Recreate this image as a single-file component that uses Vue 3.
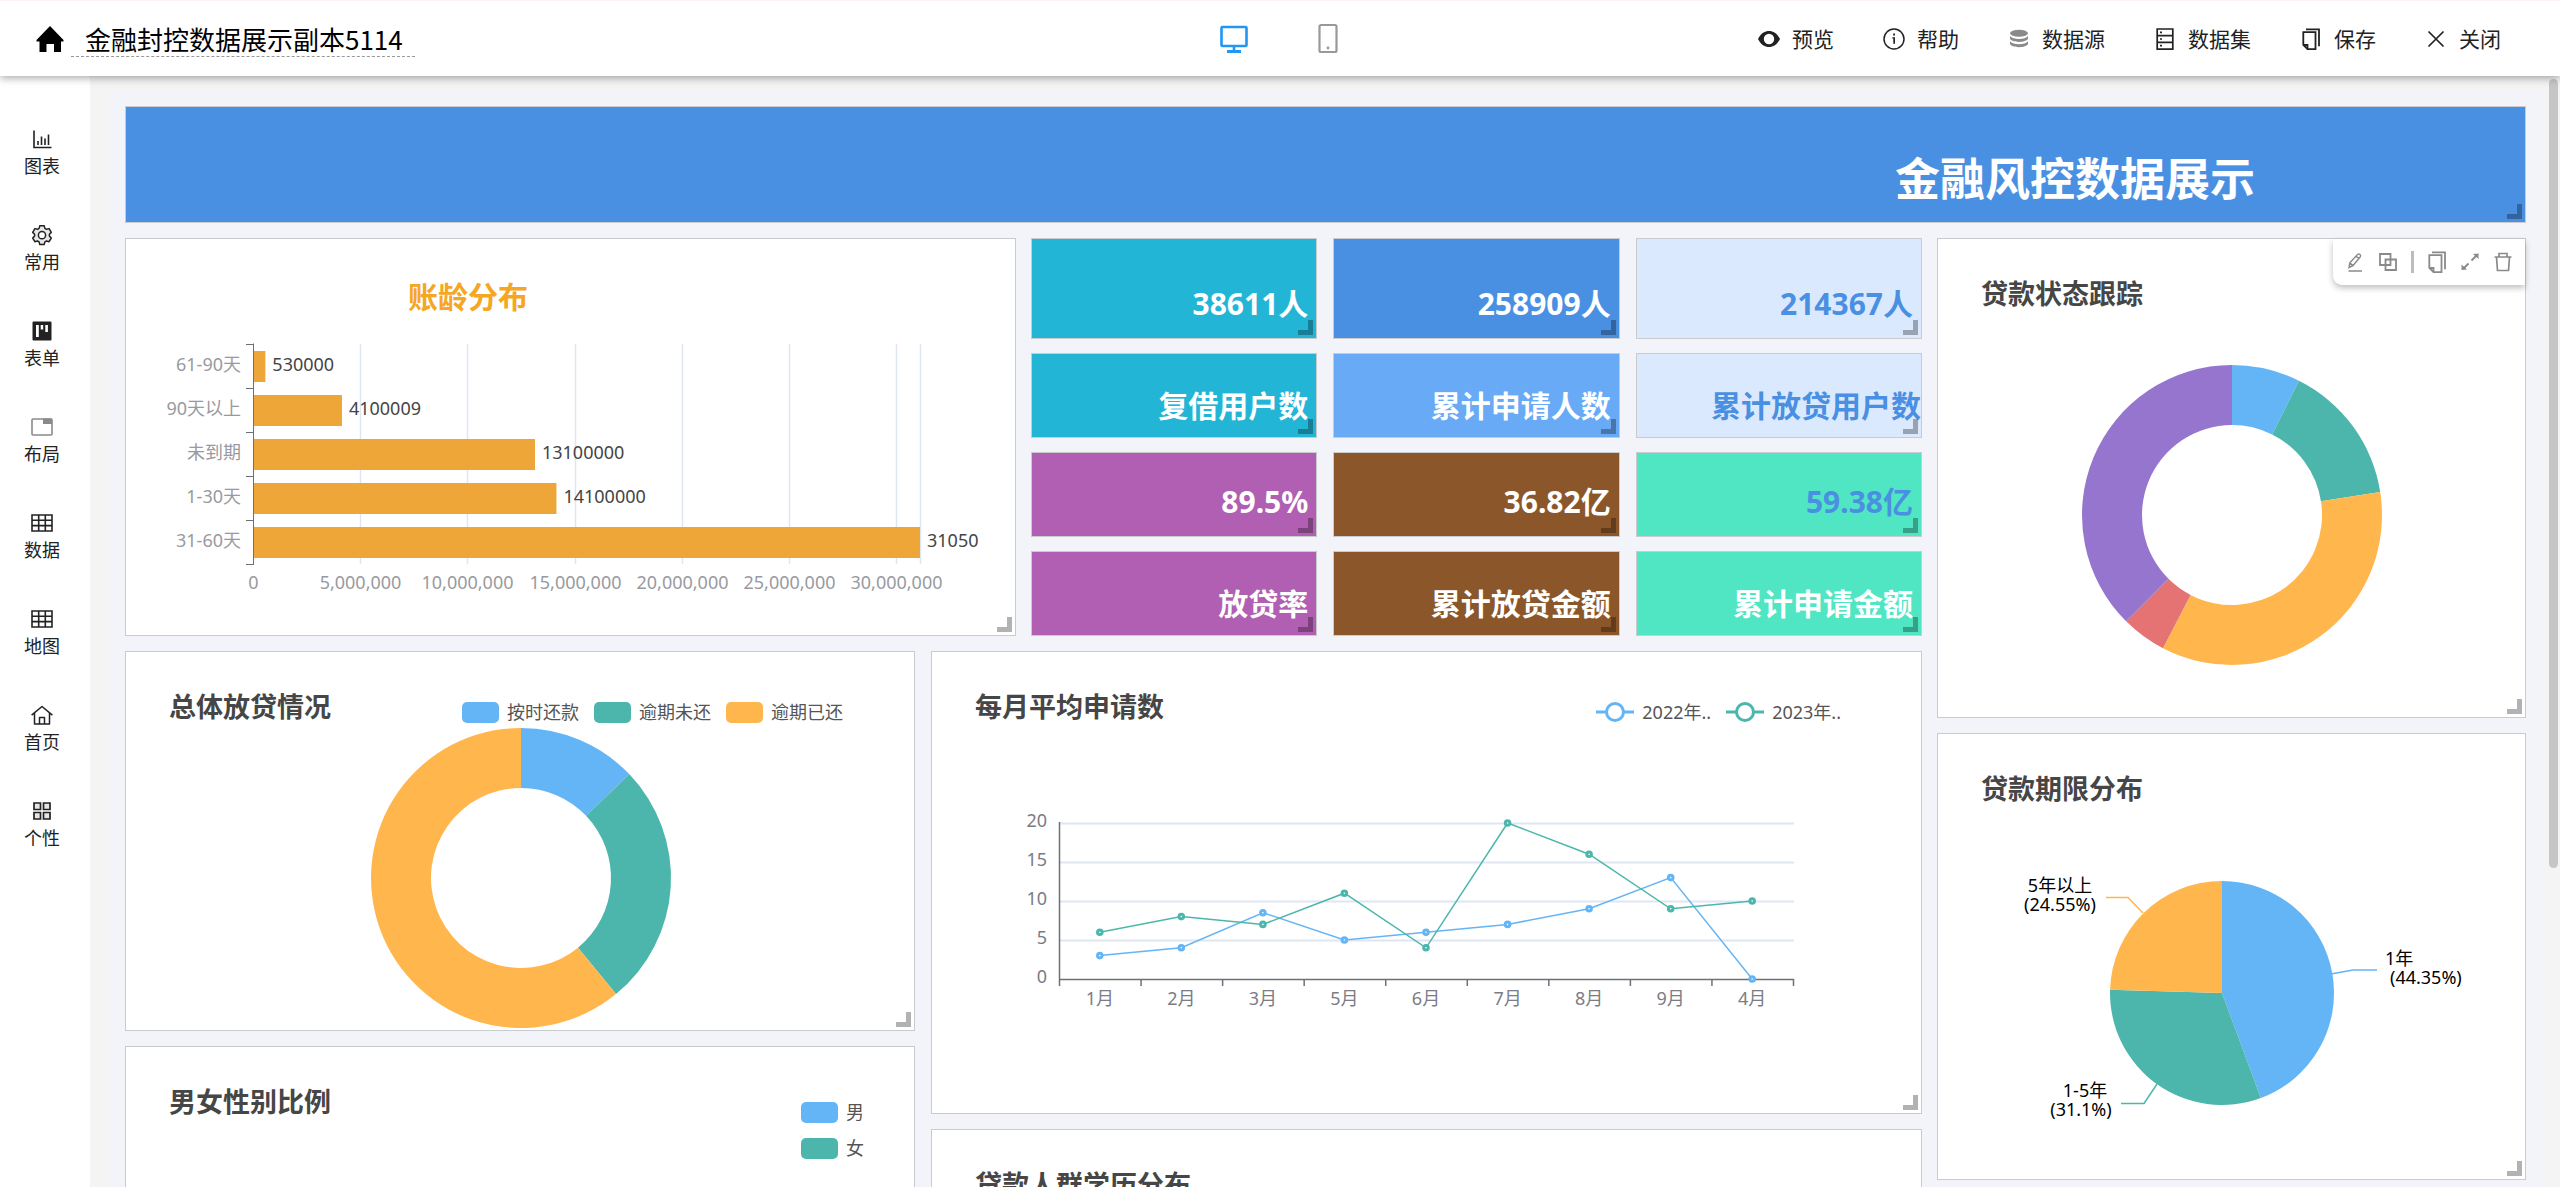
<script setup>
import { ref } from 'vue'

const projectName = ref('金融封控数据展示副本5114')

const menu = [
  { icon: 'eye', label: '预览' },
  { icon: 'info', label: '帮助' },
  { icon: 'database', label: '数据源' },
  { icon: 'server', label: '数据集' },
  { icon: 'pages', label: '保存' },
  { icon: 'close', label: '关闭' }
]

const groups = [
  { icon: 'chart', label: '图表' },
  { icon: 'gear', label: '常用' },
  { icon: 'board', label: '表单' },
  { icon: 'tab', label: '布局' },
  { icon: 'table', label: '数据' },
  { icon: 'table', label: '地图' },
  { icon: 'house', label: '首页' },
  { icon: 'tiles', label: '个性' }
]

const kpis = [
  { text: '38611人', tone: 'teal', value: true },
  { text: '258909人', tone: 'blue', value: true },
  { text: '214367人', tone: 'pale', value: true },
  { text: '复借用户数', tone: 'teal' },
  { text: '累计申请人数', tone: 'sky' },
  { text: '累计放贷用户数', tone: 'pale', flush: true },
  { text: '89.5%', tone: 'purple', value: true },
  { text: '36.82亿', tone: 'brown', value: true },
  { text: '59.38亿', tone: 'mint', value: true, accent: true },
  { text: '放贷率', tone: 'purple' },
  { text: '累计放贷金额', tone: 'brown' },
  { text: '累计申请金额', tone: 'mint' }
]

const BLUE = '#64b5f6'
const GREEN = '#4db6ac'
const ORANGE = '#ffb74d'

// Ageing bar chart
const barMax = 31050000
const barWidth = (v) => (v / barMax) * 666
const bars = [
  { name: '61-90天', value: 530000, label: '530000' },
  { name: '90天以上', value: 4100009, label: '4100009' },
  { name: '未到期', value: 13100000, label: '13100000' },
  { name: '1-30天', value: 14100000, label: '14100000' },
  { name: '31-60天', value: 31050000, label: '31050' }
]
const barTicks = [0, 5, 10, 15, 20, 25, 30].map((m) => ({
  x: Math.round(127 + barWidth(m * 1000000)) + 0.5,
  label: m ? `${m},000,000` : '0'
}))

// Pie and ring sectors, angles in degrees clockwise from the top
function sector(cx, cy, outer, inner, from, to) {
  const at = (r, deg) => {
    const a = (deg * Math.PI) / 180
    return `${(cx + r * Math.sin(a)).toFixed(2)} ${(cy - r * Math.cos(a)).toFixed(2)}`
  }
  const large = to - from > 180 ? 1 : 0
  const head = `M${at(outer, from)}A${outer} ${outer} 0 ${large} 1 ${at(outer, to)}`
  return inner
    ? `${head}L${at(inner, to)}A${inner} ${inner} 0 ${large} 0 ${at(inner, from)}Z`
    : `${head}L${cx} ${cy}Z`
}
const slices = (cx, cy, outer, inner, stops, colors) =>
  colors.map((color, i) => ({ color, d: sector(cx, cy, outer, inner, stops[i], stops[i + 1]) }))

const statusRing = slices(294, 201, 150, 90, [0, 26.5, 81.2, 207.4, 224.9, 360],
  [BLUE, GREEN, ORANGE, '#e57373', '#9575cd'])
const loanRing = slices(395, 151, 150, 90, [0, 46.3, 140.7, 360], [BLUE, GREEN, ORANGE])
const termPie = slices(284, 184, 112, 0, [0, 159.7, 271.6, 360], [BLUE, GREEN, ORANGE])

const loanLegend = [
  { label: '按时还款', color: BLUE },
  { label: '逾期未还', color: GREEN },
  { label: '逾期已还', color: ORANGE }
]
const genderLegend = [
  { label: '男', color: BLUE },
  { label: '女', color: GREEN }
]

// Monthly line chart
const months = ['1月', '2月', '3月', '5月', '6月', '7月', '8月', '9月', '4月']
const step = 734 / months.length
const series = [
  { label: '2022年..', color: BLUE, data: [3, 4, 8.5, 5, 6, 7, 9, 13, 0] },
  { label: '2023年..', color: GREEN, data: [6, 8, 7, 11, 4, 20, 16, 9, 10] }
].map((s) => ({
  ...s,
  points: s.data.map((v, i) => ({
    x: Number((127 + step * (i + 0.5)).toFixed(1)),
    y: Number((252 - v * 7.8).toFixed(1))
  }))
}))
const levels = [0, 5, 10, 15, 20]
</script>

<template>
  <div class="app">
    <svg class="sprite" aria-hidden="true">
      <symbol id="i-home" viewBox="0 0 28 28">
        <path d="M14 1 27.500 15v1.500H25V27h-7v-8h-7.500v8H3.500V16.500H.5V15z" />
      </symbol>
      <symbol id="i-desktop" viewBox="0 0 28 32">
        <rect x="1.500" y="4" width="25" height="19" rx="1" fill="none" stroke="currentColor" stroke-width="2.600" />
        <path d="M12.700 24h2.600v3H21v3H7v-3h5.700z" />
      </symbol>
      <symbol id="i-phone" viewBox="0 0 28 32">
        <rect x="5.500" y="2" width="17" height="27" rx="1.500" fill="none" stroke="currentColor" stroke-width="2.200" />
        <circle cx="14" cy="25" r="1.400" />
      </symbol>
      <symbol id="i-eye" viewBox="0 0 24 24">
        <path fill-rule="evenodd" d="M1 12C4 6 8 4 12 4s8 2 11 8c-3 6-7 8-11 8S4 18 1 12zm11-5.200a5.200 5.200 0 1 0 0 10.400 5.200 5.200 0 0 0 0-10.400z" />
      </symbol>
      <symbol id="i-info" viewBox="0 0 24 24">
        <circle cx="12" cy="12" r="10" fill="none" stroke="currentColor" stroke-width="1.500" />
        <path d="M11.200 6.500h1.800v2h-1.800zM10.300 10.200H13v6.600h-1.700v-5.400h-1z" />
      </symbol>
      <symbol id="i-database" viewBox="0 0 24 24">
        <g fill="#8a8a8a">
          <ellipse cx="12" cy="6.300" rx="9" ry="3.500" />
          <path d="M3 8.900c1.500 2 5 3 9 3s7.500-1 9-3v2.300c0 1.900-4 3.700-9 3.700s-9-1.800-9-3.700z" />
          <path d="M3 14.200c1.500 2 5 3 9 3s7.500-1 9-3v2.300c0 1.900-4 3.700-9 3.700s-9-1.800-9-3.700z" />
        </g>
      </symbol>
      <symbol id="i-server" viewBox="0 0 24 24">
        <path d="M4.200 2h15.600v20.200H4.200zM4.200 8.700h15.600M4.200 15.400h15.600" fill="none" stroke="currentColor" stroke-width="1.700" />
        <path d="M7 4.600h2v1.600H7zM7 11.200h2v1.600H7zM7 17.800h2v1.600H7z" />
      </symbol>
      <symbol id="i-pages" viewBox="0 0 24 24">
        <path d="M7 2.300h13v17M4.300 5.200H16.500v17H8.500L4.300 18zM4.300 18h4.200v4.200" fill="none" stroke="currentColor" stroke-width="1.800" />
      </symbol>
      <symbol id="i-close" viewBox="0 0 24 24">
        <path d="M4.500 4.500l15 15M19.500 4.500l-15 15" fill="none" stroke="currentColor" stroke-width="1.700" />
      </symbol>
      <symbol id="i-chart" viewBox="0 0 22 22">
        <path d="M3 2.500v17h17.500M7 17v-4M10.500 17V8.500M14 17v-6.500M17.500 17V6.500" fill="none" stroke="currentColor" stroke-width="1.600" />
      </symbol>
      <symbol id="i-gear" viewBox="0 0 22 22">
        <path d="M8.800 1.800h4.400l.7 2.600 1.600.9 2.600-.7 2.200 3.800-1.900 1.900v1.800l1.900 1.900-2.200 3.700-2.600-.7-1.600.9-.7 2.600H8.800l-.7-2.600-1.600-.9-2.600.7L1.700 14l1.900-1.900v-1.800L1.700 8.400l2.200-3.800 2.600.7 1.600-.9z" fill="#e6e6e6" stroke="currentColor" stroke-width="1.500" stroke-linejoin="round" />
        <circle cx="11" cy="11.200" r="3.600" fill="#fff" stroke="currentColor" stroke-width="1.500" />
      </symbol>
      <symbol id="i-board" viewBox="0 0 22 22">
        <path fill-rule="evenodd" d="M2.500 1.500h17a1 1 0 0 1 1 1v17a1 1 0 0 1-1 1h-17a1 1 0 0 1-1-1v-17a1 1 0 0 1 1-1zM5 5v12h2.800V5zm4.700 0v4.500h2.500V5zm4.600 0v7h2.600V5z" />
      </symbol>
      <symbol id="i-tab" viewBox="0 0 22 22">
        <g fill="none" stroke="#8a8a8a" stroke-width="1.600">
          <rect x="1" y="3" width="20" height="16" rx="1" />
        </g>
        <path d="M12 2.500h9V8h-9z" fill="#8a8a8a" />
      </symbol>
      <symbol id="i-table" viewBox="0 0 22 22">
        <path d="M1 3h20v16H1zM1 8.300h20M1 13.600h20M7.700 3v16M14.300 3v16" fill="none" stroke="currentColor" stroke-width="1.600" />
      </symbol>
      <symbol id="i-house" viewBox="0 0 22 22">
        <path d="M.6 11.200 11 2.500l10.400 8.700M3.500 9v11h15V9M8.500 20v-6.500h5V20" fill="none" stroke="currentColor" stroke-width="1.500" stroke-linejoin="round" />
      </symbol>
      <symbol id="i-tiles" viewBox="0 0 22 22">
        <path d="M3 3h6.500v6.500H3zM12.500 3H19v6.500h-6.500zM3 12.500h6.500V19H3zM12.500 12.500H19V19h-6.500z" fill="#e6e6e6" stroke="currentColor" stroke-width="1.700" />
      </symbol>
      <symbol id="i-pen" viewBox="0 0 24 24">
        <path d="M5.500 21h13.500M6 17.500l.8-4.600L14.500 4.500q1.200-1 2.400.1t.2 2.400L10 15.600zM13 6l2.600 2.400M6.800 12.900l3.200 2.700" fill="none" stroke="currentColor" stroke-width="1.400" />
      </symbol>
      <symbol id="i-copy" viewBox="0 0 24 24">
        <path d="M4 4h10.500v11H4zM9.500 9.500h10.500V20H9.500z" fill="none" stroke="currentColor" stroke-width="1.800" />
      </symbol>
      <symbol id="i-expand" viewBox="0 0 24 24">
        <path d="M13.500 10.500l5-5M5.500 18.500l5-5" fill="none" stroke="currentColor" stroke-width="1.800" />
        <path d="M20.500 3.500v5.500L15 4zM3.500 20v-5.500L9 19.500z" />
      </symbol>
      <symbol id="i-trash" viewBox="0 0 24 24">
        <path d="M3.500 7h17M8 7V3.500h8V7M5.500 7l1 13.500h11L18.500 7" fill="none" stroke="currentColor" stroke-width="1.700" />
      </symbol>
    </svg>

    <header class="topbar">
      <div class="project">
        <a class="home" href="#" aria-label="首页"><svg><use href="#i-home" /></svg></a>
        <input v-model="projectName" class="name" type="text" aria-label="名称" spellcheck="false" />
      </div>
      <div class="devices">
        <button class="device active" type="button" aria-label="桌面"><svg><use href="#i-desktop" /></svg></button>
        <button class="device" type="button" aria-label="手机"><svg><use href="#i-phone" /></svg></button>
      </div>
      <nav class="menu">
        <button v-for="m in menu" :key="m.label" type="button" class="menu-item">
          <svg aria-hidden="true"><use :href="'#i-' + m.icon" /></svg>
          <span>{{ m.label }}</span>
        </button>
      </nav>
    </header>

    <div class="main">
      <aside class="side">
        <button v-for="g in groups" :key="g.label" type="button" class="side-item">
          <svg aria-hidden="true"><use :href="'#i-' + g.icon" /></svg>
          <span>{{ g.label }}</span>
        </button>
      </aside>

      <main class="workspace">
        <div class="board">
          <section class="card banner">
            <h1>金融风控数据展示</h1>
            <i class="grip"></i>
          </section>

          <div class="columns">
            <div class="stack">
              <div class="halves">
                <section class="card">
                  <h2 class="age-title">账龄分布</h2>
                  <svg class="plot" viewBox="0 0 889 318">
                    <g stroke="#e0e6f1" stroke-width="1.500">
                      <line v-for="t in barTicks.slice(1)" :key="t.x" :x1="t.x" :x2="t.x" y1="27" y2="247" />
                      <line x1="794.5" x2="794.5" y1="27" y2="247" />
                    </g>
                    <rect v-for="(b, i) in bars" :key="b.name" x="128" :y="34 + 44 * i" :width="barWidth(b.value)" height="31" fill="#eda637" />
                    <path d="M127.500 26.500v221M120 27.500h8M120 71.500h8M120 115.500h8M120 159.500h8M120 203.500h8M120 247.500h8" fill="none" stroke="#6e7079" />
                    <g class="axis" text-anchor="end">
                      <text v-for="(b, i) in bars" :key="b.name" x="115" :y="54 + 44 * i">{{ b.name }}</text>
                    </g>
                    <g class="axis" text-anchor="middle">
                      <text v-for="t in barTicks" :key="t.label" :x="t.x" y="272">{{ t.label }}</text>
                    </g>
                    <g class="value">
                      <text v-for="(b, i) in bars" :key="b.name" :x="135 + barWidth(b.value)" :y="54 + 44 * i">{{ b.label }}</text>
                    </g>
                  </svg>
                  <i class="grip"></i>
                </section>

                <div class="kpis">
                  <section v-for="k in kpis" :key="k.text" class="card kpi" :class="[k.tone, { value: k.value, flush: k.flush, accent: k.accent }]">
                    <strong>{{ k.text }}</strong>
                    <i class="grip"></i>
                  </section>
                </div>
              </div>

              <div class="lower">
                <div class="stack">
                  <section class="card">
                    <div class="head">
                      <h2>总体放贷情况</h2>
                      <ul class="legend loan">
                        <li v-for="l in loanLegend" :key="l.label"><i class="swatch" :style="{ background: l.color }"></i>{{ l.label }}</li>
                      </ul>
                    </div>
                    <svg class="plot" viewBox="0 0 788 303">
                      <path v-for="s in loanRing" :key="s.d" :d="s.d" :fill="s.color" />
                    </svg>
                    <i class="grip"></i>
                  </section>
                  <section class="card tall">
                    <div class="head">
                      <h2>男女性别比例</h2>
                      <ul class="legend gender">
                        <li v-for="l in genderLegend" :key="l.label"><i class="swatch" :style="{ background: l.color }"></i>{{ l.label }}</li>
                      </ul>
                    </div>
                  </section>
                </div>

                <div class="stack">
                  <section class="card">
                    <div class="head">
                      <h2>每月平均申请数</h2>
                      <ul class="legend monthly">
                        <li v-for="s in series" :key="s.label">
                          <svg class="marker" viewBox="0 0 38 22">
                            <path d="M0 11h38" :stroke="s.color" stroke-width="3" />
                            <circle cx="19" cy="11" r="8.500" fill="#fff" :stroke="s.color" stroke-width="3" />
                          </svg>{{ s.label }}
                        </li>
                      </ul>
                    </div>
                    <svg class="plot" viewBox="0 0 989 386">
                      <line v-for="l in levels.slice(1)" :key="l" x1="128" x2="862" :y1="252.5 - l * 7.8" :y2="252.5 - l * 7.8" stroke="#e0e6f1" stroke-width="1.800" />
                      <path d="M127.500 95v164M127 252.500h735" fill="none" stroke="#6e7079" stroke-width="1.500" />
                      <line v-for="(m, i) in months" :key="m" :x1="127.5 + step * (i + 1)" :x2="127.5 + step * (i + 1)" y1="252" y2="259" stroke="#6e7079" stroke-width="1.500" />
                      <g class="axis dark" text-anchor="end">
                        <text v-for="l in levels" :key="l" x="115" :y="256 - l * 7.8">{{ l }}</text>
                      </g>
                      <g class="axis dark" text-anchor="middle">
                        <text v-for="(m, i) in months" :key="m" :x="127 + step * (i + 0.5)" y="278">{{ m }}</text>
                      </g>
                      <g v-for="s in series" :key="s.label" fill="none" :stroke="s.color">
                        <polyline :points="s.points.map((p) => p.x + ',' + p.y).join(' ')" stroke-width="1.500" />
                        <circle v-for="p in s.points" :key="p.x" :cx="p.x" :cy="p.y" r="2.300" fill="#fff" stroke-width="3" />
                      </g>
                    </svg>
                    <i class="grip"></i>
                  </section>
                  <section class="card tall">
                    <div class="head"><h2>贷款人群学历分布</h2></div>
                  </section>
                </div>
              </div>
            </div>

            <div class="stack">
              <section class="card">
                <div class="tools">
                  <button type="button" aria-label="编辑"><svg><use href="#i-pen" /></svg></button>
                  <button type="button" aria-label="复制"><svg><use href="#i-copy" /></svg></button>
                  <span class="divider"></span>
                  <button type="button" aria-label="粘贴"><svg><use href="#i-pages" /></svg></button>
                  <button type="button" aria-label="放大"><svg><use href="#i-expand" /></svg></button>
                  <button type="button" aria-label="删除"><svg><use href="#i-trash" /></svg></button>
                </div>
                <div class="head"><h2>贷款状态跟踪</h2></div>
                <svg class="plot" viewBox="0 0 587 403">
                  <path v-for="s in statusRing" :key="s.d" :d="s.d" :fill="s.color" />
                </svg>
                <i class="grip"></i>
              </section>
              <section class="card">
                <div class="head"><h2>贷款期限分布</h2></div>
                <svg class="plot" viewBox="0 0 587 370">
                  <path v-for="s in termPie" :key="s.d" :d="s.d" :fill="s.color" />
                  <g fill="none" stroke-width="1.500">
                    <path d="M393 165l22-4h24" stroke="#64b5f6" />
                    <path d="M219 275l-13 19.500h-23" stroke="#4db6ac" />
                    <path d="M205 104l-15-15.500h-22" stroke="#ffb74d" />
                  </g>
                  <g class="slice-label">
                    <text x="447" y="156">1年</text>
                    <text x="452" y="175">(44.35%)</text>
                    <g text-anchor="middle">
                      <text x="122" y="83">5年以上</text>
                      <text x="122" y="102">(24.55%)</text>
                      <text x="147" y="288">1-5年</text>
                      <text x="143" y="307">(31.1%)</text>
                    </g>
                  </g>
                </svg>
                <i class="grip"></i>
              </section>
            </div>
          </div>
        </div>
      </main>
      <div class="thumb"></div>
    </div>
  </div>
</template>

<style>
body {
  margin: 0;
}
</style>

<style scoped>
.app {
  height: 100vh;
  display: flex;
  flex-direction: column;
  overflow: hidden;
  background: #f4f4f4;
  color: #222;
  font-family: "Noto Sans", "Noto Sans CJK SC", sans-serif;
}
.app * {
  box-sizing: border-box;
}
.sprite {
  position: absolute;
  width: 0;
  height: 0;
}
svg {
  fill: currentColor;
  display: block;
}
button {
  border: 0;
  padding: 0;
  background: none;
  color: inherit;
  font: inherit;
  cursor: pointer;
}
h1,
h2,
ul {
  margin: 0;
  padding: 0;
  list-style: none;
}

.topbar {
  position: relative;
  z-index: 2;
  flex: none;
  height: 76px;
  padding: 0 59px 0 36px;
  display: grid;
  grid-template-columns: 1fr auto 1fr;
  align-items: center;
  background: #fff;
  border-top: 1px solid #fdf3f3;
  box-shadow: 0 2px 8px rgba(0, 0, 0, 0.35);
}
.project {
  display: flex;
  align-items: center;
  gap: 7px;
}
.home {
  color: #000;
}
.home svg {
  width: 28px;
  height: 28px;
}
.name {
  width: 344px;
  height: 37px;
  padding: 0 0 0 14px;
  border: 0;
  border-bottom: 1px dashed #999;
  background: none;
  color: #000;
  font: 26px "Noto Sans CJK SC", sans-serif;
  outline: 0;
}
.devices {
  display: flex;
  gap: 66px;
  margin-left: 24px;
}
.device {
  color: #999;
}
.device svg {
  width: 28px;
  height: 32px;
}
.device.active {
  color: #2196f3;
}
.menu {
  display: flex;
  justify-content: flex-end;
  gap: 48px;
}
.menu-item {
  display: flex;
  align-items: center;
  gap: 11px;
  font-size: 21px;
  line-height: 28px;
}
.menu-item svg {
  width: 24px;
  height: 24px;
}

.main {
  position: relative;
  flex: 1;
  min-height: 0;
  display: flex;
}
.side {
  flex: none;
  width: 90px;
  padding: 52px 6px 0 0;
  display: flex;
  flex-direction: column;
  align-items: center;
  gap: 46px;
  background: #fff;
}
.side-item {
  display: flex;
  flex-direction: column;
  align-items: center;
  gap: 4px;
  font-size: 18px;
  line-height: 24px;
}
.side-item svg {
  width: 22px;
  height: 22px;
}
.workspace {
  flex: 1;
  min-width: 0;
  padding: 15px 17px 0 19px;
  overflow-y: auto;
  scrollbar-width: none;
}
.thumb {
  position: absolute;
  top: 3px;
  right: 2px;
  width: 9px;
  height: 71%;
  min-height: 40px;
  border-radius: 5px;
  background: #c6c6c6;
}

.board {
  padding: 15px 17px 15px 16px;
  background: #f3f4f9;
}
.card {
  position: relative;
  border: 1px solid #cacbcd;
  background: #fff;
}
.banner {
  display: flex;
  justify-content: flex-end;
  align-items: flex-end;
  min-height: 117px;
  margin-bottom: 15px;
  padding: 0 270px 13px 0;
  background: #4a90e2;
  color: #fff;
}
.banner h1 {
  font-size: 45px;
  line-height: 60px;
}
.columns {
  display: grid;
  grid-template-columns: minmax(0, 1797fr) minmax(0, 589fr);
  gap: 15px;
}
.stack {
  display: flex;
  flex-direction: column;
  gap: 15px;
}
.halves {
  display: grid;
  grid-template-columns: repeat(2, minmax(0, 1fr));
  gap: 15px;
}
.lower {
  display: grid;
  grid-template-columns: minmax(0, 790fr) minmax(0, 991fr);
  gap: 16px;
}
.tall {
  min-height: 460px;
}

.grip {
  position: absolute;
  right: 3px;
  bottom: 3px;
  width: 15px;
  height: 15px;
  border-right: 5px solid rgba(0, 0, 0, 0.3);
  border-bottom: 5px solid rgba(0, 0, 0, 0.3);
}

.kpis {
  display: grid;
  grid-template-columns: repeat(3, minmax(0, 1fr));
  grid-template-rows: 101fr 85fr 85fr 85fr;
  gap: 14px 16px;
}
.kpi {
  display: flex;
  justify-content: flex-end;
  align-items: flex-end;
  padding: 0 8px 11px 0;
  color: #fff;
  font-size: 30px;
  line-height: 40px;
  white-space: nowrap;
}
.kpi.value {
  padding-bottom: 14px;
}
.kpi.flush {
  padding-right: 0;
}
.teal {
  background: #22b5d6;
}
.blue {
  background: #4a90e2;
}
.sky {
  background: #68aaf5;
}
.pale {
  background: #dbe9ff;
  color: #4a90e2;
}
.purple {
  background: #b05fb2;
}
.brown {
  background: #8b572a;
}
.mint {
  background: #50e5c3;
}
.accent {
  color: #4a90e2;
}

h2 {
  color: #464646;
  font-size: 27px;
  line-height: 40px;
}
.age-title {
  padding: 38px 0 0 282px;
  color: #f5a623;
  font-size: 30px;
}
.head {
  display: flex;
  justify-content: space-between;
  height: 75px;
  padding: 35px 0 0 43px;
}
.legend {
  display: flex;
  gap: 15px;
  margin-top: 11px;
  color: #555;
  font-size: 18px;
  line-height: 28px;
}
.legend li {
  display: flex;
  align-items: center;
  gap: 8px;
  height: 28px;
}
.legend.loan {
  margin-right: 71px;
}
.legend.monthly {
  margin-right: 80px;
}
.legend.gender {
  flex-direction: column;
  gap: 8px;
  margin: 16px 50px 0 0;
}
.swatch {
  width: 37px;
  height: 21px;
  border-radius: 5px;
}
.marker {
  width: 38px;
  height: 22px;
}
.plot {
  width: 100%;
  height: auto;
}
.plot text {
  font-size: 18px;
}
.axis {
  fill: #999aa0;
}
.axis.dark {
  fill: #7b7c85;
}
.value {
  fill: #444;
}
.slice-label {
  fill: #000;
}

.tools {
  position: absolute;
  top: 0;
  right: 0;
  height: 46px;
  padding: 0 10px;
  display: flex;
  align-items: center;
  gap: 9px;
  background: #fff;
  border-radius: 0 0 0 9px;
  box-shadow: 0 3px 6px rgba(0, 0, 0, 0.25);
  color: #8a8a8a;
}
.tools svg {
  width: 24px;
  height: 24px;
}
.divider {
  width: 3px;
  height: 22px;
  margin: 0 2px;
  background: #bdbdbd;
}
</style>
